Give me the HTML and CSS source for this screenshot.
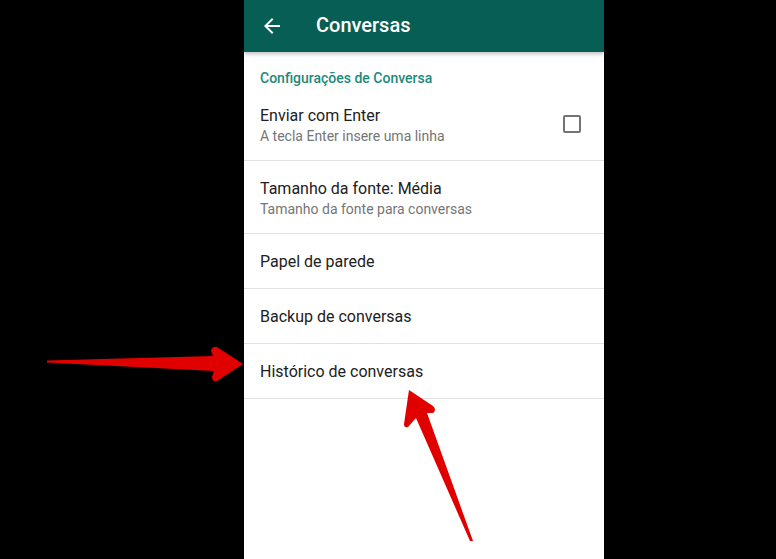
FILE: index.html
```html
<!DOCTYPE html>
<html lang="pt">
<head>
    <meta charset="UTF-8">
    <meta name="viewport" content="width=device-width, initial-scale=1.0">
    <title>Conversas</title>
    <link rel="stylesheet" href="styles.css">
</head>
<body>
    <div class="phone">
        <header class="toolbar">
            <svg class="back" width="24" height="24" viewBox="0 0 24 24">
                <path d="M20 11H7.83l5.59-5.59L12 4l-8 8 8 8 1.41-1.41L7.83 13H20v-2z" fill="#fff"/>
            </svg>
            <h1>Conversas</h1>
        </header>

        <div class="settings">
            <div class="section-title">Configurações de Conversa</div>

            <div class="row">
                <div class="texts">
                    <div class="title">Enviar com Enter</div>
                    <div class="summary">A tecla Enter insere uma linha</div>
                </div>
                <span class="checkbox"></span>
            </div>

            <div class="row">
                <div class="texts">
                    <div class="title">Tamanho da fonte: Média</div>
                    <div class="summary">Tamanho da fonte para conversas</div>
                </div>
            </div>

            <div class="row">
                <div class="title">Papel de parede</div>
            </div>

            <div class="row">
                <div class="title">Backup de conversas</div>
            </div>

            <div class="row">
                <div class="title">Histórico de conversas</div>
            </div>
        </div>
    </div>

    <!-- red arrows drawn over the screenshot -->
    <svg class="arrows" width="776" height="559" viewBox="0 0 776 559">
        <path d="M47 360.5 L213 356 L211 351 Q212 346 217 347 L243 364 L217 381 Q212 382 212 377 L214 371 L47 362.5 Z" fill="#e00000"/>
        <path d="M409 390 L433 406 Q437 410 433 413 L427 413 L473 541 L470 541 L416 418 L408 427 Q404 428 404 424 Z" fill="#e00000"/>
    </svg>
</body>
</html>
```

FILE: styles.css
```css
body {
    margin: 0;
    background-color: #000;
    font-family: Roboto, "Noto Sans", Arial, sans-serif;
    height: 559px;
    overflow: hidden;
}
.phone {
    width: 360px;
    height: 559px;
    margin-left: 244px;
    background-color: #fff;
}
.toolbar {
    height: 52px;
    background-color: #075e54;
    display: flex;
    align-items: center;
    padding-left: 16px;
    box-shadow: 0 2px 4px rgba(0, 0, 0, 0.25);
    position: relative;
}
.toolbar h1 {
    margin: 0 0 2px 32px;
    color: #fff;
    font-size: 20px;
    font-weight: 500;
}
.section-title {
    padding: 16px 16px 0;
    line-height: 20px;
    font-size: 14px;
    font-weight: 500;
    color: #1d8a7b;
}
.row {
    display: flex;
    align-items: center;
    padding: 18px 23px 16px 16px;
    border-bottom: 1px solid #e0e0e0;
}
.row:nth-child(2),
.row:nth-child(3) {
    padding-top: 18px;
    padding-bottom: 14px;
}
.texts {
    flex: 1;
}
.title {
    font-size: 16px;
    line-height: 20px;
    color: #212121;
}
.summary {
    font-size: 14px;
    line-height: 20px;
    color: #757575;
}
.checkbox {
    width: 14px;
    height: 14px;
    margin-bottom: 4px;
    border: 2px solid #737373;
    border-radius: 2px;
}
.arrows {
    position: absolute;
    left: 0;
    top: 0;
}
```
